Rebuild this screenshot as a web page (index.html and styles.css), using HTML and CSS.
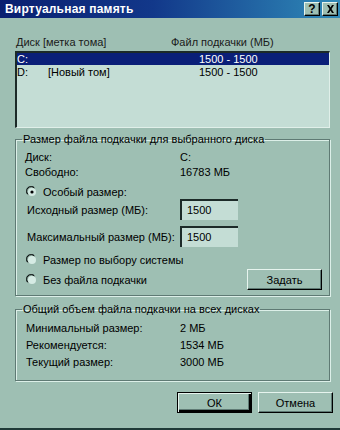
FILE: index.html
```html
<!DOCTYPE html>
<html lang="ru">
<head>
  <meta charset="UTF-8">
  <meta name="viewport" content="width=device-width, initial-scale=1.0">
  <title>Виртуальная память</title>
  <link rel="stylesheet" href="styles.css">
</head>
<body>
  <div class="dialog">
    <div class="titlebar">
      <span class="title">Виртуальная память</span>
      <div class="title-buttons">
        <span class="tbtn">?</span>
        <span class="tbtn">
          <svg width="9" height="8" viewBox="0 0 9 8"><path d="M1 0h2l1.5 2.5L6 0h2L5.5 4 8 8H6L4.5 5.5 3 8H1l2.5-4z" fill="#000"/></svg>
        </span>
      </div>
    </div>

    <div class="content">
      <div class="list-head">
        <span>Диск [метка тома]</span>
        <span>Файл подкачки (МБ)</span>
      </div>
      <div class="listbox">
        <div class="list-row selected">
          <span>C:</span><span></span><span>1500 - 1500</span>
        </div>
        <div class="list-row">
          <span>D:</span><span>[Новый том]</span><span>1500 - 1500</span>
        </div>
      </div>

      <fieldset class="group group-disk">
        <legend>Размер файла подкачки для выбранного диска</legend>
        <div class="info-row"><span>Диск:</span><span>C:</span></div>
        <div class="info-row"><span>Свободно:</span><span>16783 МБ</span></div>
        <label class="radio-row first">
          <svg class="radio" width="12" height="12" viewBox="0 0 12 12">
            <path d="M1 8A5 5 0 0 1 8 1" stroke="#5f7a74" fill="none"/>
            <path d="M2 8.5A4.2 4.2 0 0 1 8.5 2" stroke="#000" fill="none"/>
            <circle cx="6" cy="6" r="4" fill="#d6ebe4"/>
            <circle cx="6" cy="6" r="1.6" fill="#000"/>
          </svg>
          <span>Особый размер:</span>
        </label>
        <div class="field-row">
          <span class="field-label">Исходный размер (МБ):</span>
          <span class="textbox">1500</span>
        </div>
        <div class="field-row second">
          <span class="field-label">Максимальный размер (МБ):</span>
          <span class="textbox">1500</span>
        </div>
        <label class="radio-row">
          <svg class="radio" width="12" height="12" viewBox="0 0 12 12">
            <path d="M1 8A5 5 0 0 1 8 1" stroke="#5f7a74" fill="none"/>
            <path d="M2 8.5A4.2 4.2 0 0 1 8.5 2" stroke="#000" fill="none"/>
            <circle cx="6" cy="6" r="4" fill="#d6ebe4"/>
          </svg>
          <span>Размер по выбору системы</span>
        </label>
        <div class="last-row">
          <label class="radio-row">
            <svg class="radio" width="12" height="12" viewBox="0 0 12 12">
              <path d="M1 8A5 5 0 0 1 8 1" stroke="#5f7a74" fill="none"/>
              <path d="M2 8.5A4.2 4.2 0 0 1 8.5 2" stroke="#000" fill="none"/>
              <circle cx="6" cy="6" r="4" fill="#d6ebe4"/>
            </svg>
            <span>Без файла подкачки</span>
          </label>
          <button class="btn set-btn">Задать</button>
        </div>
      </fieldset>

      <fieldset class="group group-total">
        <legend>Общий объем файла подкачки на всех дисках</legend>
        <div class="total-row"><span>Минимальный размер:</span><span>2 МБ</span></div>
        <div class="total-row"><span>Рекомендуется:</span><span>1534 МБ</span></div>
        <div class="total-row"><span>Текущий размер:</span><span>3000 МБ</span></div>
      </fieldset>

      <div class="actions">
        <button class="btn default">ОК</button>
        <button class="btn">Отмена</button>
      </div>
    </div>
  </div>
</body>
</html>
```

FILE: styles.css
```css
body {
  margin: 0;
  background-color: #9ebfb3;
  font-family: "Liberation Sans", Arial, sans-serif;
  font-size: 11px;
  color: #000;
}
.dialog {
  width: 340px;
  height: 430px;
  box-sizing: border-box;
  border-bottom: 2px solid #203a38;
  overflow: hidden;
}
.titlebar {
  height: 18px;
  display: flex;
  align-items: center;
  justify-content: space-between;
  padding: 0 2px 0 5px;
  background: linear-gradient(to right, #0a1f70 0%, #12388a 45%, #2f8ab8 100%);
}
.title {
  color: #fff;
  font-weight: bold;
  font-size: 12px;
  letter-spacing: 0.2px;
}
.title-buttons {
  display: flex;
  gap: 2px;
}
.tbtn {
  width: 16px;
  height: 14px;
  box-sizing: border-box;
  display: flex;
  align-items: center;
  justify-content: center;
  background-color: #9ebfb3;
  border-top: 1px solid #e6f4ee;
  border-left: 1px solid #e6f4ee;
  border-right: 1px solid #000;
  border-bottom: 1px solid #000;
  box-shadow: inset -1px -1px 0 #5f7a74;
  font-weight: bold;
  font-size: 12px;
  line-height: 12px;
}
.content {
  padding: 0 10px 0 15px;
}
.list-head {
  display: grid;
  grid-template-columns: 155px 1fr;
  padding-left: 1px;
  margin-top: 17px;
  height: 14px;
  line-height: 14px;
  color: #1a1a1a;
}
.listbox {
  margin-top: 2px;
  height: 77px;
  box-sizing: border-box;
  background-color: #c4ddd5;
  border-top: 2px solid #1c2a28;
  border-left: 2px solid #1c2a28;
  border-right: 1px solid #e0efe9;
  border-bottom: 1px solid #e0efe9;
}
.list-row {
  display: grid;
  grid-template-columns: 31px 151px 1fr;
  height: 12px;
  line-height: 12px;
  margin-bottom: 1px;
}
.list-row.selected {
  background-color: #0a1f78;
  color: #fff;
}
.group {
  margin: 0;
  border: 1px solid #5f7a74;
  box-shadow: 1px 1px 0 #dcefe8, inset 1px 1px 0 #dcefe8;
  padding: 0 8px 0 9px;
}
.group legend {
  padding: 0 1px;
  margin-left: -3px;
  line-height: 13px;
}
.group-disk {
  margin-top: 5px;
  padding-top: 4px;
  padding-bottom: 5px;
}
.info-row {
  display: grid;
  grid-template-columns: 155px 1fr;
  height: 15px;
  line-height: 15px;
}
.radio-row {
  display: flex;
  align-items: center;
  gap: 5px;
  height: 14px;
  margin-top: 6px;
  padding-left: 1px;
}
.radio-row.first {
  margin-top: 5px;
}
.field-row {
  display: grid;
  grid-template-columns: 153px 58px;
  align-items: center;
  height: 21px;
  padding-left: 2px;
}
.field-row.second {
  margin-top: 6px;
}
.textbox {
  height: 21px;
  box-sizing: border-box;
  padding: 3px 0 0 5px;
  background-color: #c4ddd5;
  border-top: 2px solid #1c2a28;
  border-left: 2px solid #1c2a28;
}
.last-row {
  display: flex;
  justify-content: space-between;
  align-items: center;
  margin-top: 2px;
  height: 21px;
}
.last-row .radio-row {
  margin-top: 0;
}
.btn {
  width: 75px;
  height: 21px;
  padding: 0;
  font-family: "Liberation Sans", Arial, sans-serif;
  font-size: 11px;
  color: #000;
  background-color: #9ebfb3;
  border-top: 1px solid #e6f4ee;
  border-left: 1px solid #e6f4ee;
  border-right: 1px solid #000;
  border-bottom: 1px solid #000;
  box-shadow: inset -1px -1px 0 #5f7a74;
}
.set-btn {
  margin-right: -1px;
}
.group-total {
  margin-top: 7px;
  padding-top: 4px;
  padding-bottom: 9px;
}
.total-row {
  display: grid;
  grid-template-columns: 154px 1fr;
  height: 17px;
  line-height: 17px;
  padding-left: 1px;
}
.actions {
  display: flex;
  justify-content: flex-end;
  gap: 6px;
  margin-top: 11px;
  margin-right: -3px;
}
.btn.default {
  border: 1px solid #000;
  box-shadow: inset 1px 1px 0 #e6f4ee, inset -2px -2px 0 #000, inset -3px -3px 0 #5f7a74;
}
```
